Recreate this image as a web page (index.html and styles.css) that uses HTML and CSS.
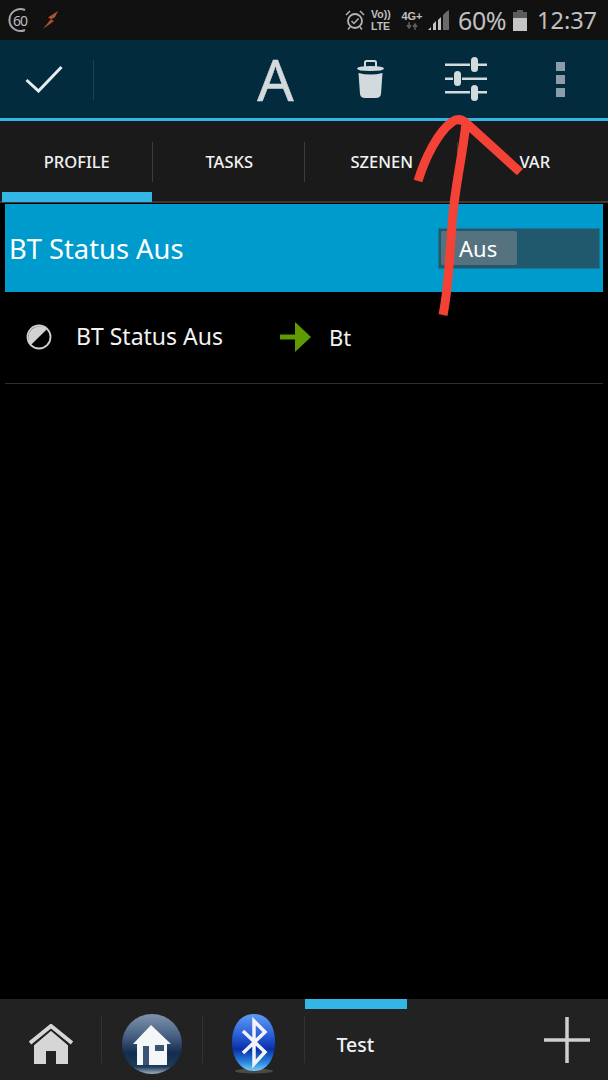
FILE: index.html
```html
<!DOCTYPE html>
<html lang="de">
<head>
<meta charset="utf-8">
<title>Profile</title>
<link rel="stylesheet" href="styles.css">
</head>
<body>
<div class="screen">
  <header class="status">
    <svg class="st-60" viewBox="0 0 20 26" width="20" height="26"><path d="M17 3A11 11 0 1 0 17 23" fill="none" stroke="#a8a8a8" stroke-width="2"/></svg>
    <span class="st-60-text">60</span>
    <svg class="st-flash" viewBox="0 0 16 18" width="16" height="18"><path d="M15 0L5 6.500L8 8L0 18L11 10L8 8.500L12 6Z" fill="#b2512c"/></svg>
    <span class="st-grow"></span>
    <svg class="st-alarm" viewBox="0 0 20 20" width="20" height="20"><circle cx="10" cy="11" r="7" fill="none" stroke="#b4b4b4" stroke-width="1.800"/><path d="M6.500 11l2.500 2.500 4.500-5" fill="none" stroke="#b4b4b4" stroke-width="1.500"/><path d="M1 5l4-4M19 5l-4-4M5 17l-2 2.500M15 17l2 2.500" stroke="#b4b4b4" stroke-width="1.500"/></svg>
    <span class="st-volte"><span>Vo))</span><span>LTE</span></span>
    <span class="st-net"><span>4G+</span><svg viewBox="0 0 14 8" width="14" height="8"><path d="M4 8V2M2 5l2-3 2 3M10 0v6M8 3l2 3 2-3" fill="none" stroke="#5e5e5e" stroke-width="1.500" transform="matrix(1 0 0 -1 0 8)"/></svg></span>
    <svg class="st-signal" viewBox="0 0 21 20" width="21" height="20"><path d="M0 20l3-3v3Z" fill="#c4c4c4"/><path d="M5 20v-6l3-3v9Z" fill="#c4c4c4"/><path d="M10 20V10l3-3v13Z" fill="#c4c4c4"/><path d="M15 20V5l3-3v18Z M18 2l3-2v20h-3Z" fill="#6a6a6a"/></svg>
    <span class="st-pct">60%</span>
    <svg class="st-batt" viewBox="0 0 14 21" width="14" height="21"><path d="M4 0h6v2h4v19H0V2h4Z" fill="#5c5c5c"/><path d="M0 8h14v13H0Z" fill="#c6c6c6"/></svg>
    <span class="st-time">12:37</span>
  </header>

  <nav class="actionbar">
    <div class="ab-check">
      <svg viewBox="0 0 38 28" width="38" height="28"><path d="M1.500 15L13.500 26L36.500 2" fill="none" stroke="#e8edf0" stroke-width="3"/></svg>
    </div>
    <div class="ab-sep"></div>
    <div class="ab-spacer"></div>
    <div class="ab-cell ab-letter">A</div>
    <div class="ab-cell">
      <svg viewBox="0 0 29 38" width="29" height="38"><path d="M9 7V2.500Q9 1 10.500 1H18.500Q20 1 20 2.500V7" fill="none" stroke="#d3dade" stroke-width="2"/><path d="M1 8.500Q1 6 14.500 6T28 8.500Q28 11 14.500 11T1 8.500Z" fill="#d3dade"/><path d="M2.500 13Q14.500 16 26.500 13L25 34Q24.500 38 20 38H9Q4.500 38 4 34Z" fill="#d3dade"/></svg>
    </div>
    <div class="ab-cell">
      <svg viewBox="0 0 42 44" width="42" height="44" fill="#d3dade"><path d="M0 6.500h25v2.600H0ZM33 6.500h9v2.600h-9ZM0 20.500h8v2.600H0ZM17 20.500h25v2.600H17ZM0 34h25v2.600H0ZM33 34h9v2.600h-9Z"/><rect x="26" y="0" width="7" height="15" rx="3.500"/><rect x="9" y="14" width="7" height="15" rx="3.500"/><rect x="26" y="28" width="7" height="16" rx="3.500"/></svg>
    </div>
    <div class="ab-cell">
      <div class="ab-dots"><i></i><i></i><i></i></div>
    </div>
  </nav>

  <div class="tabs">
    <div class="tab-row">
      <div class="tab">PROFILE</div>
      <div class="tab">TASKS</div>
      <div class="tab">SZENEN</div>
      <div class="tab">VAR</div>
    </div>
    <div class="tab-strip"><div class="tab-indicator"></div></div>
  </div>

  <main class="content">
    <section class="profile-head">
      <h1 class="profile-title">BT Status Aus</h1>
      <div class="toggle"><div class="toggle-thumb">Aus</div></div>
    </section>
    <section class="profile-row">
      <svg class="row-state" viewBox="0 0 26 26" width="26" height="26"><circle cx="13" cy="13" r="11.500" fill="#000" stroke="#d2d2d2" stroke-width="1.800"/><path d="M21.100 4.900A11.500 11.500 0 0 0 4.900 21.100Z" fill="#d2d2d2"/></svg>
      <span class="row-name">BT Status Aus</span>
      <svg class="row-arrow" viewBox="0 0 31 30" width="31" height="30"><path d="M0 12.500h15V0L31 15 15 30V17.500H0Z" fill="#5f9a00"/></svg>
      <span class="row-task">Bt</span>
    </section>
  </main>

  <footer class="bottombar">
    <div class="bb-cell">
      <svg viewBox="0 0 44 40" width="44" height="40"><path d="M22 6L5 21V40H17V27H27V40H39V21Z" fill="#d6d6d6"/><path d="M1 19L22 2L43 19" fill="none" stroke="#d6d6d6" stroke-width="4"/><path d="M22 6L3 22" stroke="#222" stroke-width="1.500"/><path d="M22 6L41 22" stroke="#222" stroke-width="1.500"/></svg>
    </div>
    <div class="bb-cell">
      <svg viewBox="0 0 62 62" width="62" height="62">
        <defs>
          <linearGradient id="globe" x1="0" y1="0" x2="0" y2="1"><stop offset="0" stop-color="#7e93ae"/><stop offset="0.35" stop-color="#4a6384"/><stop offset="0.65" stop-color="#122d4e"/><stop offset="0.88" stop-color="#1d3b5a"/><stop offset="1" stop-color="#a0b3c4"/></linearGradient>
          <linearGradient id="oval" x1="0" y1="0" x2="0" y2="1"><stop offset="0" stop-color="#5f9bf2"/><stop offset="0.35" stop-color="#2c62dc"/><stop offset="0.62" stop-color="#0a2fa8"/><stop offset="0.85" stop-color="#2b87e0"/><stop offset="1" stop-color="#7ccdf5"/></linearGradient>
        </defs>
        <circle cx="31" cy="31" r="30" fill="url(#globe)"/>
        <path d="M30 12L50 31H46V52H16V31H12Z" fill="#f4f6f8"/>
        <path d="M22 33h6v19h-6ZM34 32h9v6H34Z" fill="#3a5474"/>
      </svg>
    </div>
    <div class="bb-cell">
      <svg viewBox="0 0 44 60" width="44" height="60"><ellipse cx="22" cy="57" rx="19" ry="2.500" fill="#4a4a4a"/><path d="M22 0C36 0 43 12 43 28S36 57 22 57 0 44 0 28 8 0 22 0Z" fill="url(#oval)"/><path d="M11 17L33 38L22 50V7L33 18L11 39" fill="none" stroke="#f2f4f8" stroke-width="3.500"/></svg>
    </div>
    <div class="bb-test"><div class="bb-indicator"></div><div class="bb-label">Test</div></div>
    <div class="bb-plus">
      <svg viewBox="0 0 46 46" width="46" height="46"><path d="M23 0v46M0 23h46" stroke="#cfcfcf" stroke-width="3.500"/></svg>
    </div>
  </footer>

  <svg class="scribble" viewBox="0 0 608 1080" width="608" height="1080"><path d="M418 181C425 158 438 132 452 122Q459 117 466 123L520 172M466 123C462 160 454 190 452 225C450 250 449 285 443 315" fill="none" stroke="#f44336" stroke-width="9"/></svg>
</div>
</body>
</html>
```

FILE: styles.css
```css
* { box-sizing: border-box; }
html, body { margin: 0; padding: 0; background: #000; }
.screen {
  position: relative;
  width: 608px;
  height: 1080px;
  overflow: hidden;
  display: flex;
  flex-direction: column;
  font-family: "Noto Sans", "Open Sans", sans-serif;
  color: #fff;
}

.status {
  height: 40px;
  flex: none;
  background: #111;
  display: flex;
  align-items: center;
  padding: 0 12px 0 8px;
  color: #c0c0c0;
}
.st-60 { flex: none; }
.st-60-text { font-size: 14px; width: 14px; margin-left: -15px; color: #bdbdbd; letter-spacing: -1px; }
.st-flash { margin-left: 16px; flex: none; margin-top: -1px; }
.st-grow { flex: 1; }
.st-alarm { flex: none; margin-right: 6px; }
.st-volte { display: flex; flex-direction: column; font-family: "Liberation Sans", sans-serif; font-size: 10.500px; line-height: 12.500px; font-weight: 700; width: 21px; margin-right: 9px; white-space: nowrap; }
.st-net { display: flex; flex-direction: column; align-items: center; font-family: "Liberation Sans", sans-serif; font-size: 11px; line-height: 12px; font-weight: 700; width: 22px; margin-right: 5px; white-space: nowrap; }
.st-signal { flex: none; margin-right: 9px; }
.st-pct { font-size: 25px; line-height: 40px; width: 50px; letter-spacing: -0.4px; margin-right: 5px; white-space: nowrap; }
.st-batt { flex: none; margin-right: 10px; }
.st-time { font-size: 23.500px; line-height: 40px; width: 59px; white-space: nowrap; }

.actionbar {
  height: 81px;
  flex: none;
  background: #022c3e;
  border-bottom: 3px solid #33b5e5;
  display: flex;
  align-items: center;
}
.ab-check { width: 93px; flex: none; display: flex; justify-content: center; padding-right: 6px; }
.ab-sep { width: 1px; height: 40px; background: #1c4359; flex: none; margin-top: 2px; }
.ab-spacer { flex: 1; }
.ab-cell { width: 95px; flex: none; display: flex; align-items: center; justify-content: center; height: 78px; }
.ab-letter { font-size: 57px; font-weight: 400; line-height: 78px; color: #d3dade; -webkit-text-stroke: 0.5px #d3dade; }
.ab-dots { display: flex; flex-direction: column; gap: 4px; }
.ab-dots i { display: block; width: 9px; height: 9px; background: #8e9bab; }

.tabs { flex: none; height: 82px; background: #1a1a1a; display: flex; flex-direction: column; border-bottom: 2px solid #3a3a3a; }
.tab-row { height: 71px; display: flex; align-items: center; flex: none; padding-top: 10px; }
.tab {
  width: 152.500px;
  height: 40px;
  flex: none;
  display: flex;
  align-items: center;
  justify-content: center;
  padding-left: 2px;
  font-size: 16.500px;
  font-weight: 500;
  color: #f2f2f2;
  border-right: 1px solid #3c3c3c;
}
.tab:last-child { border-right: none; }
.tab-strip { height: 9px; flex: none; }
.tab-indicator { width: 150px; margin-left: 2px; height: 10px; background: #33b5e5; }

.content { flex: 1; background: #000; padding: 1px 5px 0; min-height: 0; }
.profile-head {
  height: 88px;
  background: #009bcd;
  display: flex;
  align-items: center;
  justify-content: space-between;
  padding: 0 3px 0 4px;
}
.profile-title { margin: 0; font-size: 27.300px; font-weight: 400; color: #fff; }
.toggle { width: 162px; height: 41px; background: #20596e; border: 1px solid #1b7696; padding: 2px; }
.toggle-thumb {
  width: 76px;
  height: 35px;
  background: #54737f;
  border-radius: 2px;
  border-bottom: 1px solid #2a5164;
  font-size: 22px;
  line-height: 34px;
  padding-left: 18px;
  color: #fff;
}
.profile-row {
  height: 92px;
  display: flex;
  align-items: center;
  border-bottom: 1px solid #2e2e2e;
  padding-left: 21px;
  padding-bottom: 2px;
}
.row-state { flex: none; }
.row-name { font-size: 23px; width: 204px; margin-left: 24px; margin-top: -2px; color: #f2f2f2; white-space: nowrap; }
.row-arrow { flex: none; }
.row-task { font-size: 22px; margin-left: 18px; color: #f2f2f2; }

.bottombar {
  height: 81px;
  flex: none;
  background: #222;
  display: flex;
  align-items: stretch;
}
.bb-cell {
  width: 101.500px;
  flex: none;
  display: flex;
  align-items: center;
  justify-content: center;
  padding-top: 9px;
  background: linear-gradient(#333, #333) right 17px / 1px 47px no-repeat;
}
.bb-test { width: 102px; flex: none; display: flex; flex-direction: column; }
.bb-indicator { height: 10px; background: #33b5e5; flex: none; }
.bb-label { font-size: 19.500px; font-weight: 500; padding: 22px 0 0 32px; color: #f2f2f2; }
.bb-plus { flex: 1; display: flex; justify-content: flex-end; padding: 18px 18px 0 0; }

.scribble { position: absolute; left: 0; top: 0; pointer-events: none; }
```
